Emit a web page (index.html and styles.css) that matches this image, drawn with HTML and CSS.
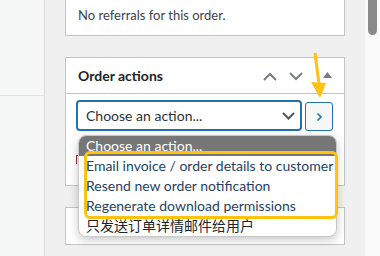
FILE: index.html
```html
<!DOCTYPE html>
<html>
<head>
<meta charset="utf-8">
<link rel="stylesheet" href="styles.css">
</head>
<body>
<div class="page">
  <aside class="left"><div class="left-top"></div><div class="left-bottom"></div></aside>
  <main class="main">
    <section class="card card-referrals">
      <p class="muted">No referrals for this order.</p>
    </section>
    <section class="card card-actions">
      <header class="card-head">
        <h2 class="card-title">Order actions</h2>
        <div class="head-tools">
          <svg class="tool" width="14" height="9" viewBox="0 0 14 9"><path d="M1 8 L7 2 L13 8" fill="none" stroke="#787c82" stroke-width="2"/></svg>
          <svg class="tool" width="14" height="9" viewBox="0 0 14 9"><path d="M1 1 L7 7 L13 1" fill="none" stroke="#787c82" stroke-width="2"/></svg>
          <svg class="tool tri" width="9" height="6" viewBox="0 0 9 6"><path d="M0 6 L4.5 0 L9 6 Z" fill="#787c82"/></svg>
        </div>
      </header>
      <div class="action-row">
        <div class="select">
          <span>Choose an action...</span>
          <svg width="13" height="8" viewBox="0 0 13 8"><path d="M1 1 L6.5 6.5 L12 1" fill="none" stroke="#50575e" stroke-width="2"/></svg>
        </div>
        <button class="go"><svg width="7" height="10" viewBox="0 0 7 10"><path d="M1.5 1.5 L5 5 L1.5 8.5" fill="none" stroke="#2271b1" stroke-width="1.6"/></svg></button>
      </div>
      <div class="actions-foot"><span class="trash-mark"></span></div>
    </section>
    <section class="card card-next"></section>
  </main>
  <div class="scroll"><div class="thumb"></div></div>
</div>
<ul class="dropdown">
  <li class="opt selected">Choose an action...</li>
  <li class="opt boxed">Email invoice / order details to customer</li>
  <li class="opt boxed">Resend new order notification</li>
  <li class="opt boxed">Regenerate download permissions</li>
  <li class="opt">只发送订单详情邮件给用户</li>
</ul>
<div class="highlight"></div>
<svg class="arrow" width="30" height="52" viewBox="0 0 30 52"><path d="M5 1 L9 32" stroke="#ffc20e" stroke-width="3" fill="none"/><path d="M1 30 L16 31 L10 46 Z" fill="#ffc20e"/></svg>
</body>
</html>
```
FILE: styles.css
```css
* { box-sizing: border-box; }
html, body { margin: 0; padding: 0; }
body {
  width: 380px; height: 256px; overflow: hidden;
  background: #f0f0f1;
  font-family: "Lato", "Noto Sans", "Noto Sans CJK SC", sans-serif;
  color: #3c434a;
  position: relative;
}
.page { display: flex; height: 256px; }
.left {
  width: 45px; flex: none;
  background: #f6f7f7;
  border-right: 1px solid #dcdcde;
  display: flex; flex-direction: column;
}
.left-top { height: 96px; border-bottom: 1px solid #e4e4e4; }
.main {
  width: 320px; flex: none;
  padding-left: 20px;
  display: flex; flex-direction: column;
}
.card {
  width: 280px;
  background: #fff;
  border: 1px solid #c3c4c7;
}
.card-referrals { height: 36px; border-top: none; padding: 6px 12px 0; }
.muted { margin: 0; font-size: 13px; line-height: 18px; color: #3c434a; }
.card-actions { margin-top: 21px; height: 129px; }
.card-head {
  height: 36px; border-bottom: 1px solid #c3c4c7;
  display: flex; align-items: center; justify-content: space-between;
  padding: 0 12px 0 12px;
}
.card-title { margin: 0; font-size: 14px; font-weight: 700; color: #1d2327; line-height: 20px; }
.head-tools { display: flex; align-items: center; gap: 12px; padding-top: 1px; }
.tool.tri { margin-left: 8px; margin-bottom: 2px; }
.action-row { display: flex; align-items: flex-end; gap: 3px; padding: 6px 0 0 10px; }
.select {
  width: 226px; height: 31px;
  border: 2px solid #2271b1; border-radius: 4px;
  display: flex; align-items: center; justify-content: space-between;
  padding: 0 5px 0 8px;
  font-size: 14px; color: #2c3338;
}
.go {
  width: 28px; height: 29px; padding: 0;
  border: 1px solid #2271b1; border-radius: 3px;
  background: #f6f7f7;
  display: flex; align-items: center; justify-content: center;
}
.actions-foot { padding: 24px 0 0 10px; height: 60px; }
.trash-mark { display: block; width: 4px; height: 9px; border-top: 1px solid #b32d2e; border-left: 1px solid #b32d2e; }
.card-next { margin-top: 21px; height: 38px; }
.scroll { width: 15px; flex: none; background: #fafafa; position: relative; }
.scroll .thumb {
  position: absolute; left: 3px; top: -10px; width: 9px; height: 45px;
  background: #8a8a8a; border-radius: 0 0 5px 5px;
}
.dropdown {
  position: absolute; left: 78px; top: 135px;
  width: 259px; margin: 0; padding: 0; list-style: none;
  background: #fff;
  border: 1px solid #c8c8c8; border-radius: 8px;
  box-shadow: 0 3px 10px rgba(0,0,0,0.22);
  overflow: hidden;
  font-size: 14px; color: #1d2327;
}
.opt { height: 20px; line-height: 20px; padding-left: 7px; white-space: nowrap; }
.opt.boxed { color: #1f3f66; }
.opt.selected { background: #767676; color: #fff; }
.highlight {
  position: absolute; left: 84px; top: 151px; width: 254px; height: 68px;
  border: 3px solid #ffc20e; border-radius: 6px;
}
.arrow { position: absolute; left: 310px; top: 52px; }
```
